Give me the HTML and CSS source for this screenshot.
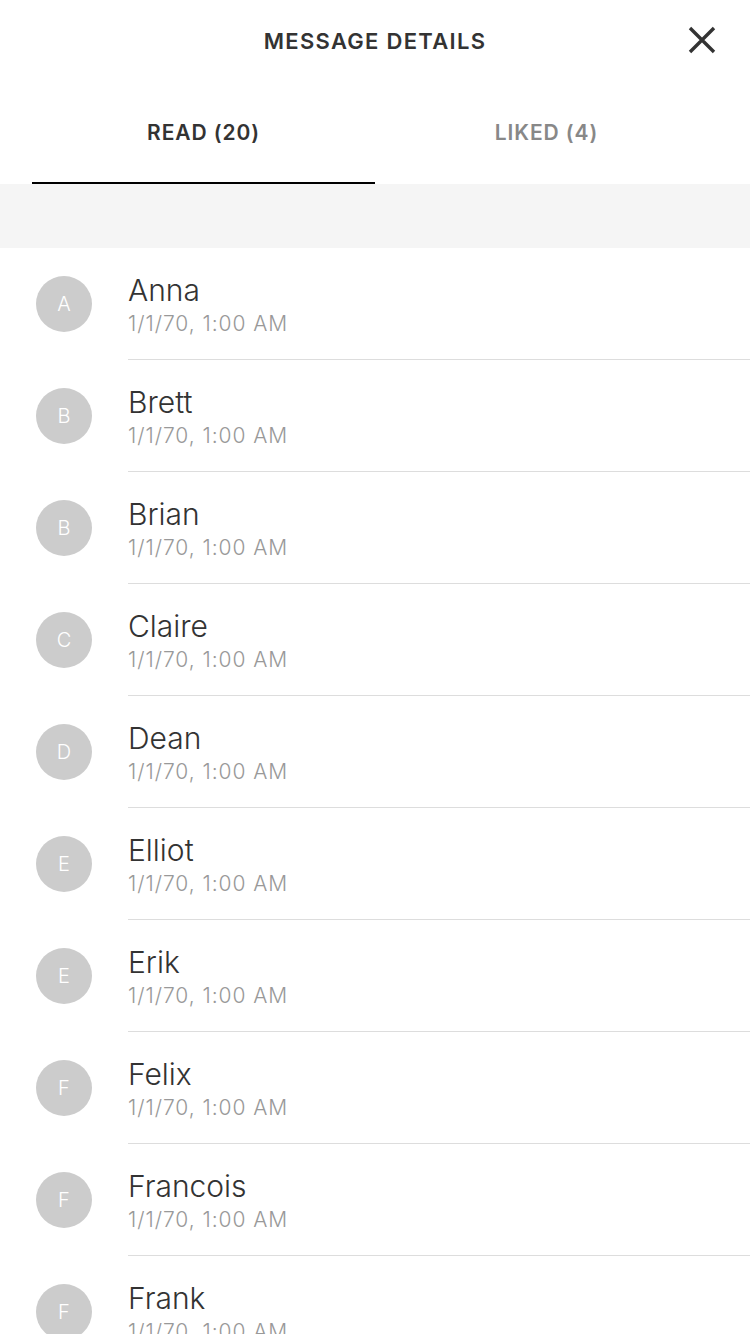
FILE: index.html
```html
<!DOCTYPE html>
<html>
<head>
<meta charset="utf-8">
<link rel="stylesheet" href="styles.css">
</head>
<body>
<div class="screen">
  <header class="header">
    <h1 class="title">MESSAGE DETAILS</h1>
    <button class="close" aria-label="Close">
      <svg width="30" height="30" viewBox="0 0 30 30"><path d="M3 3 L27 27 M27 3 L3 27" stroke="#333" stroke-width="3.4" stroke-linecap="butt" fill="none"/></svg>
    </button>
  </header>
  <nav class="tabs">
    <div class="tab active">READ (20)</div>
    <div class="tab">LIKED (4)</div>
  </nav>
  <div class="band"></div>
  <ul class="list">
    <li class="row"><div class="avatar">A</div><div class="info"><div class="name">Anna</div><div class="date">1/1/70, 1:00 AM</div></div></li>
    <li class="row"><div class="avatar">B</div><div class="info"><div class="name">Brett</div><div class="date">1/1/70, 1:00 AM</div></div></li>
    <li class="row"><div class="avatar">B</div><div class="info"><div class="name">Brian</div><div class="date">1/1/70, 1:00 AM</div></div></li>
    <li class="row"><div class="avatar">C</div><div class="info"><div class="name">Claire</div><div class="date">1/1/70, 1:00 AM</div></div></li>
    <li class="row"><div class="avatar">D</div><div class="info"><div class="name">Dean</div><div class="date">1/1/70, 1:00 AM</div></div></li>
    <li class="row"><div class="avatar">E</div><div class="info"><div class="name">Elliot</div><div class="date">1/1/70, 1:00 AM</div></div></li>
    <li class="row"><div class="avatar">E</div><div class="info"><div class="name">Erik</div><div class="date">1/1/70, 1:00 AM</div></div></li>
    <li class="row"><div class="avatar">F</div><div class="info"><div class="name">Felix</div><div class="date">1/1/70, 1:00 AM</div></div></li>
    <li class="row"><div class="avatar">F</div><div class="info"><div class="name">Francois</div><div class="date">1/1/70, 1:00 AM</div></div></li>
    <li class="row"><div class="avatar">F</div><div class="info"><div class="name">Frank</div><div class="date">1/1/70, 1:00 AM</div></div></li>
  </ul>
</div>
</body>
</html>
```
FILE: styles.css
```css
* { box-sizing: border-box; }
html, body {
  margin: 0;
  padding: 0;
  background: #fff;
}
body {
  font-family: "Inter", "Roboto", "Liberation Sans", sans-serif;
  color: #333;
}
.screen {
  width: 750px;
  height: 1334px;
  overflow: hidden;
}
.header {
  position: relative;
  height: 82px;
  display: flex;
  align-items: center;
  justify-content: center;
}
.title {
  margin: 0;
  font-size: 22px;
  font-weight: 600;
  letter-spacing: 1.3px;
  color: #333;
}
.close {
  position: absolute;
  right: 33px;
  top: 25px;
  width: 30px;
  height: 30px;
  padding: 0;
  border: 0;
  background: none;
  display: flex;
}
.tabs {
  display: flex;
  padding: 0 32px;
}
.tab {
  flex: 1;
  height: 102px;
  display: flex;
  align-items: center;
  justify-content: center;
  font-size: 21px;
  font-weight: 600;
  letter-spacing: 0.9px;
  color: #888;
  border-bottom: 2px solid transparent;
}
.tab.active {
  color: #333;
  border-bottom-color: #000;
}
.band {
  height: 64px;
  background: #f5f5f5;
}
.list {
  list-style: none;
  margin: 0;
  padding: 0;
}
.row {
  display: flex;
  align-items: center;
  height: 112px;
}
.avatar {
  flex: none;
  width: 56px;
  height: 56px;
  margin-left: 36px;
  margin-right: 36px;
  border-radius: 50%;
  background: #ccc;
  color: #fff;
  font-size: 20px;
  font-weight: 300;
  display: flex;
  align-items: center;
  justify-content: center;
}
.info {
  flex: 1;
  align-self: stretch;
  display: flex;
  flex-direction: column;
  justify-content: center;
  padding-top: 3px;
  border-bottom: 1px solid #ddd;
}
.name {
  font-size: 30px;
  font-weight: 300;
  line-height: 36px;
  color: #333;
}
.date {
  margin-top: 2px;
  font-size: 21px;
  font-weight: 300;
  letter-spacing: 0.95px;
  line-height: 28px;
  color: #999;
}
```
